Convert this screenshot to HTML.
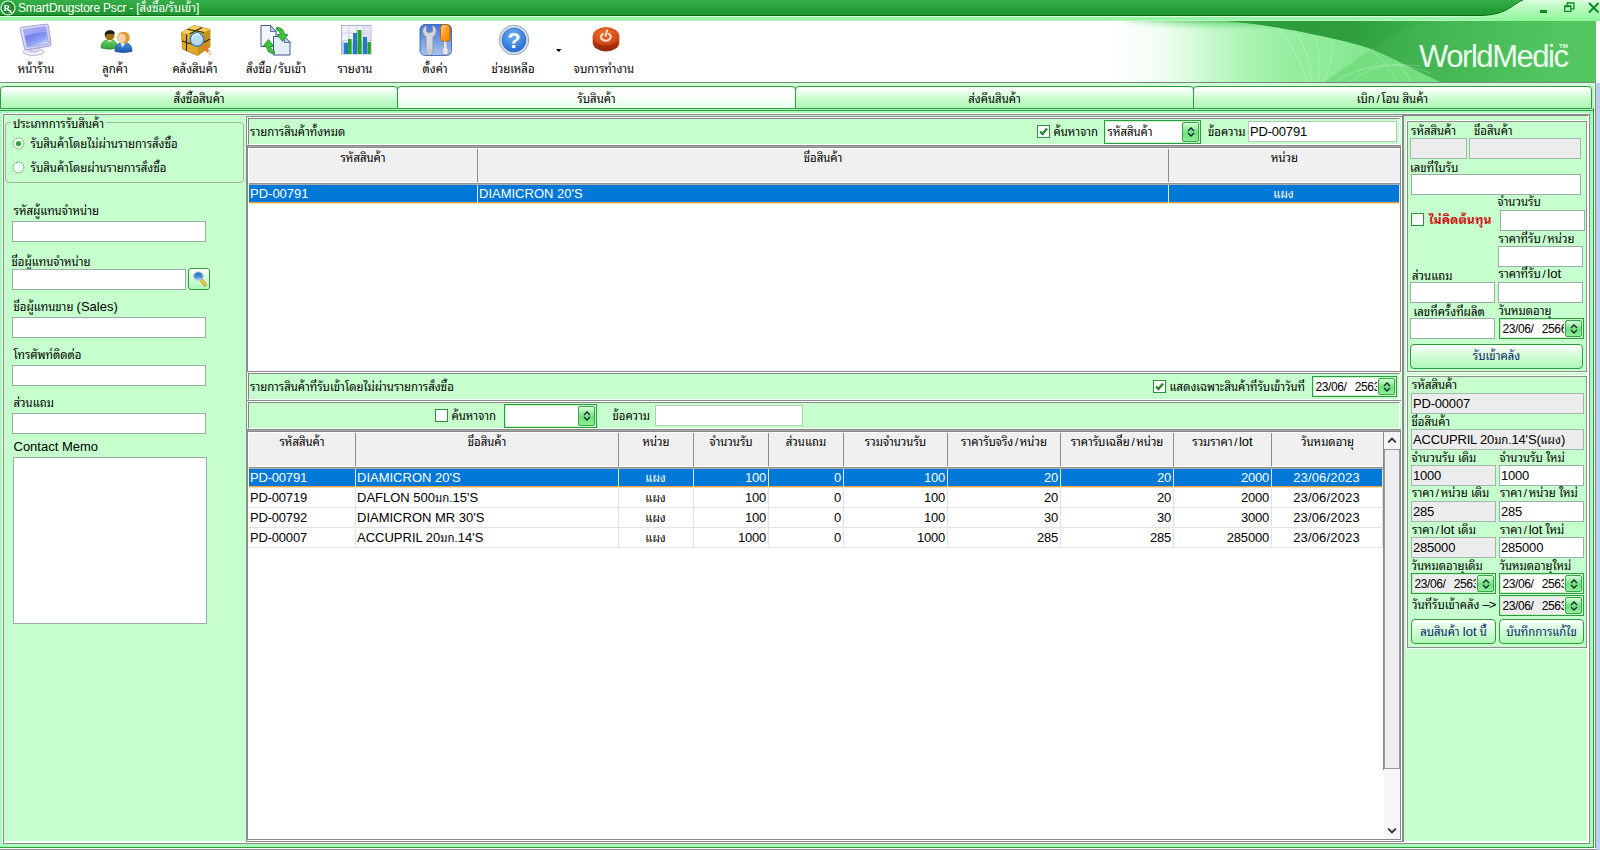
<!DOCTYPE html>
<html lang="th">
<head>
<meta charset="utf-8">
<title>SmartDrugstore Pscr</title>
<style>
html,body{margin:0;padding:0;}
body{width:1600px;height:850px;overflow:hidden;position:relative;background:#c6ffcd;
 font-family:"Liberation Sans","Noto Sans Thai Looped","Loma","Tahoma",sans-serif;font-size:11.4px;color:#000;}
*{box-sizing:border-box;}
.a{position:absolute;}
.l{font-size:13px;}
.s{padding:0 1.700px;}
.t{position:absolute;white-space:nowrap;line-height:14px;height:14px;}
.in{position:absolute;background:#fff;border:1px solid #9aadaa;}
.dis{background:#ececec;border-color:#a3b8ac;}
.v{position:absolute;white-space:nowrap;font-size:13px;line-height:15px;left:1px;top:2px;}
.dsp{letter-spacing:0.15px;}
/* title */
#title{left:0;top:0;width:1600px;height:21px;background:linear-gradient(#dcfde0 0,#b9f9c0 8px,#8ef79a 21px);}
#titled{left:0;top:0;width:1600px;height:16px;}
#band{left:0;top:16px;width:1520px;height:5px;-webkit-mask-image:linear-gradient(to right,#000 0,#000 1440px,transparent 1515px);mask-image:linear-gradient(to right,#000 0,#000 1440px,transparent 1515px);background:linear-gradient(#dcffe2 0,#dcffe2 1px,#98f5a6 1px,#98f5a6 4px,#d2fbd7 5px);}
#tb{left:0;top:21px;width:1596px;height:61px;background:#fff;}
#tbline{left:0;top:82px;width:1596px;height:1px;background:#788a7c;}
#rstrip{left:1596px;top:21px;width:4px;height:829px;background:#fff;}
#rstrip2{left:1596px;top:83px;width:4px;height:767px;background:#b9d0ee;}
.tbl{position:absolute;top:62px;width:90px;text-align:center;white-space:nowrap;line-height:14px;font-size:11.4px;}
.tab{position:absolute;top:86px;height:23px;border:1px solid #2f9a3f;border-radius:4px 4px 0 0;
 background:linear-gradient(#ffffff 0%,#effff0 22%,#c9fcce 55%,#adf7b5 100%);text-align:center;line-height:23px;padding-top:1px;font-size:11.4px;}
.tab.act{background:linear-gradient(#ffffff 0%,#fbfffb 40%,#e6ffe8 100%);}
/* panels */
.pn{position:absolute;border:1px solid #8a8a8a;box-shadow:inset 1px 1px 0 #fff;}
.pn2{position:absolute;border-top:1px solid #868686;border-left:1px solid #868686;border-right:1px solid #fff;border-bottom:1px solid #fff;}
.hc{position:absolute;height:33px;border-right:1px solid #8c8c8c;text-align:center;line-height:14px;padding-top:2px;white-space:nowrap;}
.num{letter-spacing:-0.2px;}
.v .th{font-size:11.4px;letter-spacing:0;}
.dt{font-size:12px;overflow:hidden;left:2.5px;top:3px;white-space:pre;letter-spacing:-0.4px;word-spacing:1.24px;}
.row{position:absolute;left:0;height:20px;white-space:nowrap;}
.row .c{position:absolute;top:0;height:100%;border-right:1px solid #e3e3e3;border-bottom:1px solid #e3e3e3;font-size:13px;line-height:19.400px;padding:0 2px 0 1px;overflow:hidden;}
.row .th{font-size:11.4px;padding-top:1px;}
.row.sel{background:#0078d7;color:#fff;}
.row.sel .c{border-right-color:#dfe9f5;border-bottom-color:#f3dcb0;box-shadow:inset 0 -1px 0 #e8a33d;line-height:17.400px;}
.r{text-align:right;}
.m{text-align:center;}
.cb{position:absolute;width:13px;height:13px;background:#fff;border:1px solid #2f8f3d;}
.combo{position:absolute;background:#fff;border:1px solid #2f9a3f;box-shadow:inset 0 0 0 1px #c4f5c9;}
.combo .bt{position:absolute;right:1px;top:1px;bottom:1px;width:17px;border:1px solid #39a648;border-radius:2px;
 background:linear-gradient(#d6ffd9,#6fe07c 55%,#8cf096);}
.combo .bt svg{position:absolute;left:50%;top:50%;margin:-5px 0 0 -4px;}
.btn{position:absolute;border:1px solid #2f9a3f;border-radius:4px;background:linear-gradient(#ffffff 0%,#e0ffe3 30%,#aef8b6 100%);
 text-align:center;font-size:11.4px;color:#0a246a;white-space:nowrap;}
</style>
</head>
<body>
<!-- TITLE BAR -->
<div class="a" id="title"></div>
<svg class="a" id="titled" width="1600" height="16" viewBox="0 0 1600 16">
 <defs>
  <linearGradient id="tg" x1="0" y1="0" x2="0" y2="1">
   <stop offset="0" stop-color="#35ad49"/><stop offset="0.75" stop-color="#239b34"/><stop offset="1" stop-color="#1f922f"/>
  </linearGradient>
 </defs>
 <path d="M0 0H1523C1512 4 1508 15 1480 15.5H0Z" fill="url(#tg)"/>
 <path d="M0 15.5H1480C1508 15 1512 4 1523 0" fill="none" stroke="#0b6b16" stroke-width="1"/>
 <circle cx="8" cy="8" r="7" fill="#1f8a30" stroke="#e8ffe9" stroke-width="1.2"/>
 <text x="3.5" y="11" font-family="Liberation Serif,serif" font-size="9" font-weight="bold" fill="#fff">R</text>
 <text x="8.5" y="13" font-family="Liberation Serif,serif" font-size="7" font-weight="bold" fill="#fff">x</text>
 <rect x="1540" y="10" width="7" height="3" fill="#0f8a1f"/>
 <path d="M1564.700 6.200h6.200v5.200h-6.200zM1567.200 5v-2h6.700v5.800h-2.500" fill="none" stroke="#0f8a1f" stroke-width="1.300"/>
 <path d="M1564.700 6.200h6.200" stroke="#0f8a1f" stroke-width="2"/>
 <path d="M1589 3l9.500 9.500M1598.500 3l-9.500 9.500" stroke="#0f8a1f" stroke-width="2" fill="none"/>
</svg>
<div class="t" style="left:18px;top:1px;color:#fff;font-size:11.4px;"><span style="font-size:12px;letter-spacing:-0.2px;">SmartDrugstore Pscr - [</span>สั่งซื้อ/รับเข้า<span style="font-size:12px;">]</span></div>
<div class="a" id="band"></div>

<!-- TOOLBAR -->
<div class="a" id="tb"></div>
<svg class="a" style="left:1000px;top:21px;" width="596" height="61" viewBox="0 0 596 61">
 <defs>
  <linearGradient id="wg" x1="0" y1="0" x2="1" y2="0">
   <stop offset="0" stop-color="#ffffff"/>
   <stop offset="0.19" stop-color="#ffffff"/>
   <stop offset="0.27" stop-color="#f0fef2"/>
   <stop offset="0.34" stop-color="#cdfad3"/>
   <stop offset="0.42" stop-color="#a8f4b0"/>
   <stop offset="0.50" stop-color="#93ed9e"/>
   <stop offset="0.62" stop-color="#84e790"/>
   <stop offset="1" stop-color="#6edb7b"/>
  </linearGradient>
  <linearGradient id="dg" gradientUnits="userSpaceOnUse" x1="250" y1="0" x2="560" y2="70">
   <stop offset="0" stop-color="#2c9c3c"/>
   <stop offset="0.3" stop-color="#2d9d3d"/>
   <stop offset="0.55" stop-color="#3bb24b"/>
   <stop offset="1" stop-color="#4dc45c"/>
  </linearGradient>
  <linearGradient id="tl" x1="0" y1="0" x2="1" y2="0">
   <stop offset="0" stop-color="#3aa84a" stop-opacity="0"/>
   <stop offset="0.35" stop-color="#3aa84a" stop-opacity=".8"/>
   <stop offset="1" stop-color="#2c9c3c" stop-opacity="1"/>
  </linearGradient>
  <radialGradient id="tb2" cx=".5" cy=".5" r=".5"><stop offset="0" stop-color="#5fcf6d" stop-opacity=".9"/><stop offset="1" stop-color="#8fe89a" stop-opacity="0"/></radialGradient>
  <radialGradient id="wb" gradientUnits="userSpaceOnUse" cx="150" cy="38" r="150" gradientTransform="translate(0 12) scale(1 .7)">
   <stop offset="0" stop-color="#fff" stop-opacity="1"/><stop offset=".6" stop-color="#fff" stop-opacity=".85"/><stop offset="1" stop-color="#fff" stop-opacity="0"/>
  </radialGradient>
 </defs>
 <rect width="596" height="61" fill="url(#wg)"/>
 <rect x="120" y="0" width="476" height="2" fill="url(#tl)"/>
 <ellipse cx="235" cy="0" rx="120" ry="10" fill="url(#tb2)"/>
 <path d="M226 0C270 4 310 12 337 18.500C352 22 362 25 371 28C395 38 420 52 440 61H596V0Z" fill="url(#dg)"/>
 <path d="M324 61C345 47 360 36 371 28C385 19 405 7 431 0H596V61Z" fill="#fff" opacity=".04"/>
 <path d="M324 61C345 47 360 36 371 28C395 38 420 52 440 61Z" fill="#74de81"/>
 <g fill="none" stroke="#f3fff4" stroke-width=".8" opacity=".32">
  <path d="M308 61C300 40 290 20 278 6"/>
  <path d="M312 61C310 40 304 22 294 9"/>
  <path d="M318 61C320 42 320 26 314 14"/>
  <path d="M324 61C330 44 334 30 331 18"/>
  <path d="M335 61C350 50 380 40 420 45"/>
  <path d="M350 61C370 45 395 38 430 52"/>
  <path d="M372 30C385 40 392 50 396 61"/>
  <path d="M395 40C403 47 408 54 410 61"/>
 </g>
 <text x="419" y="46" font-family="Liberation Sans,sans-serif" font-size="31" letter-spacing="-1.45" fill="#eefff0">WorldMedic</text>
 <text x="559" y="27" font-family="Liberation Sans,sans-serif" font-size="6" font-weight="bold" fill="#eefff0">TM</text>
</svg>
<div class="a" id="tbline"></div>
<div class="a" style="left:0;top:83px;width:1595px;height:765px;background:#aafcb8;"></div>
<div class="a" style="left:0;top:83px;width:1595px;height:3px;background:#d2fcd8;"></div>
<div class="a" id="rstrip"></div><div class="a" id="rstrip2"></div>
<div class="a" style="left:1595px;top:82px;width:1px;height:768px;background:#858585;"></div>

<!-- toolbar icons -->

<!-- icon: monitor -->
<svg class="a" style="left:19px;top:23px;" width="34" height="34" viewBox="0 0 34 34">
 <defs><linearGradient id="mg" x1="0.1" y1="0" x2="0.7" y2="1"><stop offset="0" stop-color="#9a9af8"/><stop offset=".4" stop-color="#747cec"/><stop offset=".75" stop-color="#93a6f5"/><stop offset="1" stop-color="#dfe8ff"/></linearGradient>
 <linearGradient id="mf" x1="0" y1="0" x2="1" y2="1"><stop offset="0" stop-color="#e6e6fa"/><stop offset="1" stop-color="#c4c4ea"/></linearGradient></defs>
 <ellipse cx="14.500" cy="28.800" rx="10.500" ry="3.700" fill="#ebebf6" stroke="#b4b4d4" stroke-width=".9"/>
 <ellipse cx="14.500" cy="28" rx="6" ry="1.800" fill="#d0d0e6"/>
 <path d="M11.500 21.500l1.200 6.500h6l.8-7.500z" fill="#e4e4f4" stroke="#b9b9d8" stroke-width=".7"/>
 <path d="M1.800 4.400L27.300 1.100Q29.200 1 29.500 2.800L32 21Q32.100 22.700 30.600 23L7.700 26.900Q5.900 27.100 5.500 25.400L1.100 6.300Q.9 4.700 1.800 4.400Z" fill="url(#mf)" stroke="#9898cf" stroke-width=".9"/>
 <path d="M4.300 6.600L26.900 3.600L29.200 20.600L8.200 24.200Z" fill="url(#mg)" stroke="#8f93d8" stroke-width=".5"/>
 <path d="M4.300 6.600L26.900 3.600L27.600 9.500C20 8.500 12 12.500 5.800 13Z" fill="#b9b9fb" opacity=".6"/>
</svg>
<!-- icon: people -->
<svg class="a" style="left:100px;top:27px;" width="33" height="27" viewBox="0 0 33 27">
 <defs><linearGradient id="pgm" x1="0" y1="0" x2="0" y2="1"><stop offset="0" stop-color="#6fd56f"/><stop offset="1" stop-color="#2f9e37"/></linearGradient>
 <linearGradient id="pgw" x1="0" y1="0" x2="0" y2="1"><stop offset="0" stop-color="#4a8fe0"/><stop offset="1" stop-color="#1b57a8"/></linearGradient></defs>
 <g transform="translate(0 2) scale(1 .9)">
 <path d="M1 21C1 14.500 4.500 12 9.500 12S17 14.500 17.500 21Q9.500 24 1 21Z" fill="url(#pgm)" stroke="#2a8c30" stroke-width=".7"/>
 <path d="M7 12.200L9.500 14.500L12.500 12.200Z" fill="#eef6ee"/>
 <ellipse cx="9.800" cy="7.500" rx="4.600" ry="5" fill="#a06c12"/>
 <path d="M4.800 7.500C4.500 3 7 1.500 10 1.500S15 3.200 14.600 6C12 5 8 4.800 6.500 6.200Q5.800 7 5.400 9Z" fill="#1c1a14"/>
 <path d="M15 25C15 18 18 15 23.500 15S32 18 32 25Q23.500 27.500 15 25Z" fill="url(#pgw)" stroke="#174e96" stroke-width=".7"/>
 <path d="M20.500 15.200L22.200 20.500L24 18L25.500 15.200Z" fill="#e9f1fb"/>
 <ellipse cx="23.500" cy="9.500" rx="6.300" ry="6.500" fill="#e29a2c"/>
 <ellipse cx="21.800" cy="10.300" rx="3.800" ry="4.900" fill="#fbd3b0"/>
 </g>
</svg>
<!-- icon: box + magnifier -->
<svg class="a" style="left:180px;top:24px;" width="33" height="33" viewBox="0 0 33 33">
 <path d="M1.500 8.500L14 1.500L30 5.500V23L17.500 31.500L2.500 25Z" fill="#e0ac28" stroke="#b07d10" stroke-width=".8"/>
 <path d="M1.500 8.500L14 1.500L30 5.500L17.500 11.500Z" fill="#f3cf57"/>
 <path d="M17.500 11.500L30 5.500V23L17.500 31.500Z" fill="#c8931a"/>
 <path d="M7.500 5.200L24 8.500M9.500 10L22 3.500M6.500 10.500V27M2 17L17.500 22L30 15" fill="none" stroke="#2a2208" stroke-width="1.100"/>
 <path d="M22 21L30 29.500" stroke="#e8792a" stroke-width="3.200" stroke-linecap="round"/>
 <path d="M29 28.500L30.500 30" stroke="#f1e3d6" stroke-width="3" stroke-linecap="round"/>
 <circle cx="17" cy="15.500" r="6.800" fill="#b6dbf3" stroke="#4d7fae" stroke-width="1.500"/>
 <path d="M12.500 13.500A5 5 0 0 1 19 10.500" fill="none" stroke="#eaf6ff" stroke-width="1.600" stroke-linecap="round"/>
</svg>
<!-- icon: documents + arrows -->
<svg class="a" style="left:260px;top:24px;" width="33" height="33" viewBox="0 0 33 33">
 <path d="M1 1.500H10.500L16 7.500V22.500H1Z" fill="#f4f8fe" stroke="#42578f" stroke-width="1"/>
 <path d="M10.500 1.500V7.500H16Z" fill="#bfd2ee" stroke="#42578f" stroke-width=".8"/>
 <path d="M13.500 12.500H24.500L30 18.500V31H13.500Z" fill="#e6eefb" stroke="#42578f" stroke-width="1"/>
 <path d="M24.500 12.500V18.500H30Z" fill="#bfd2ee" stroke="#42578f" stroke-width=".8"/>
 <path d="M16.500 3.500Q23.500 3 24.500 10.500H28L22.500 17.500L17 10.500H20.500Q20 6.500 16.500 6Z" fill="#3cc23c" stroke="#1c8c1c" stroke-width=".8"/>
 <path d="M14.500 29.500Q7.500 30 6.500 22.500H3L8.500 15.500L14 22.500H10.500Q11 26.500 14.500 27Z" fill="#3cc23c" stroke="#1c8c1c" stroke-width=".8"/>
</svg>
<!-- icon: chart -->
<svg class="a" style="left:341px;top:25px;" width="31" height="30" viewBox="0 0 31 30">
 <rect x=".5" y=".5" width="29.500" height="28.500" fill="#f1f1f8" stroke="#9aa0c4" stroke-width=".8"/>
 <path d="M.5 8H30M.5 15.500H30M8 .5V29M15.500 .5V29M23 .5V29" stroke="#c4bfd8" stroke-width=".7" fill="none"/>
 <rect x="21" y="1" width="9" height="14" fill="#d8daf0" opacity=".7"/>
 <rect x="0.800" y="17" width="29" height="12" fill="#9cc3ea" opacity=".8"/>
 <rect x="3" y="18" width="4" height="11" fill="#2778c9"/>
 <rect x="7" y="14" width="3.500" height="15" fill="#2aa41f"/>
 <rect x="12" y="8" width="4" height="21" fill="#2778c9"/>
 <rect x="16.500" y="5" width="4" height="24" fill="#2aa41f"/>
 <rect x="22" y="12" width="4" height="17" fill="#2778c9"/>
 <rect x="26.500" y="17" width="3.300" height="12" fill="#2aa41f"/>
</svg>
<!-- icon: tools -->
<svg class="a" style="left:419px;top:23px;" width="34" height="34" viewBox="0 0 34 34">
 <defs><linearGradient id="tgb" x1="0" y1="0" x2="0" y2="1"><stop offset="0" stop-color="#3f74d8"/><stop offset="1" stop-color="#a9c4f3"/></linearGradient>
 <linearGradient id="tgo" x1="0" y1="0" x2="1" y2="1"><stop offset="0" stop-color="#ffd9a0"/><stop offset=".5" stop-color="#ff9a1c"/><stop offset="1" stop-color="#f57f00"/></linearGradient></defs>
 <rect x="1" y="1.500" width="31.500" height="31" rx="5" fill="url(#tgb)" stroke="#2b55a8" stroke-width=".8"/>
 <path d="M7.500 2.500C3.500 4 2.500 9 5.500 12.500L7 14V28.500Q7.200 32 10.500 32T14 28.500V14L15.500 12.500C18.500 9 17.500 4 13.500 2.500V8.500Q10.500 11 7.500 8.500Z" fill="#d4d7de" stroke="#8a8f9c" stroke-width=".8"/>
 <circle cx="10.500" cy="28" r="1.600" fill="#f4f4f8" stroke="#8a8f9c" stroke-width=".7"/>
 <rect x="21.500" y="1.500" width="9.500" height="17" rx="3.500" fill="url(#tgo)" stroke="#b45a00" stroke-width=".8"/>
 <path d="M24.500 18.500h3.500v6l1.200 2v4.500q-3 1.500-6 0v-4.500l1.300-2z" fill="#e4e6ec" stroke="#8a8f9c" stroke-width=".7"/>
</svg>
<!-- icon: help -->
<svg class="a" style="left:498px;top:24px;" width="32" height="32" viewBox="0 0 32 32">
 <defs><radialGradient id="hg" cx=".45" cy=".3" r=".8"><stop offset="0" stop-color="#6cb0f4"/><stop offset="1" stop-color="#1d63cf"/></radialGradient></defs>
 <circle cx="16" cy="16" r="14.800" fill="#d6dde8" stroke="#8f9db4" stroke-width=".9"/>
 <circle cx="16" cy="16" r="12" fill="url(#hg)" stroke="#2d62b8" stroke-width=".6"/>
 <text x="16" y="24" text-anchor="middle" font-family="Liberation Sans,sans-serif" font-weight="bold" font-size="22" fill="#fff">?</text>
</svg>
<!-- icon: power -->
<svg class="a" style="left:591px;top:26px;" width="30" height="28" viewBox="0 0 30 28">
 <defs><radialGradient id="pg" cx=".45" cy=".35" r=".75"><stop offset="0" stop-color="#f0702a"/><stop offset=".6" stop-color="#d9501a"/><stop offset="1" stop-color="#b93a0e"/></radialGradient>
 <linearGradient id="pw" x1="0" y1="0" x2="0" y2="1"><stop offset="0" stop-color="#c8420f"/><stop offset="1" stop-color="#8f2405"/></linearGradient></defs>
 <path d="M1.700 10.500V16.500A13.300 9 0 0 0 28.300 16.500V10.500Z" fill="url(#pw)"/>
 <ellipse cx="15" cy="10.300" rx="13.300" ry="9.200" fill="url(#pg)"/>
 <path d="M11.600 8A4.900 3.800 0 1 0 17.800 7.800" fill="none" stroke="#fbe3d3" stroke-width="2.100" stroke-linecap="round"/>
 <path d="M16.200 4.300L14.600 9.800" stroke="#fbe3d3" stroke-width="1.900" stroke-linecap="round"/>
</svg>

<div class="tbl" style="left:-9px;">หน้าร้าน</div>
<div class="tbl" style="left:70px;">ลูกค้า</div>
<div class="tbl" style="left:150px;">คลังสินค้า</div>
<div class="tbl" style="left:231px;">สั่งซื้อ<span class="s">/</span>รับเข้า</div>
<div class="tbl" style="left:310px;">รายงาน</div>
<div class="tbl" style="left:390px;">ตั้งค่า</div>
<div class="tbl" style="left:468px;">ช่วยเหลือ</div>
<div class="tbl" style="left:559px;">จบการทำงาน</div>
<svg class="a" style="left:556px;top:49px;" width="6" height="4"><path d="M0 0h5.500l-2.750 3z" fill="#000"/></svg>

<!-- TABS -->
<div class="tab" style="left:0;width:398px;">สั่งซื้อสินค้า</div>
<div class="tab act" style="left:397px;width:399px;">รับสินค้า</div>
<div class="tab" style="left:795px;width:399px;">ส่งคืนสินค้า</div>
<div class="tab" style="left:1193px;width:399px;">เบิก<span class="s">/</span>โอน สินค้า</div>
<div class="a" style="left:0px;top:110px;width:1594px;height:1px;background:#2f9a3f;"></div>
<div class="a" style="left:1593px;top:108px;width:1px;height:740px;background:#2f9a3f;"></div>
<div class="a" style="left:0px;top:847px;width:1594px;height:1px;background:#2f9a3f;"></div>
<div class="a" style="left:0px;top:848px;width:1596px;height:1px;background:#ffffff;"></div>
<div class="a" style="left:0px;top:849px;width:1596px;height:1px;background:#8c8c8c;"></div>
<div class="a" style="left:1594px;top:83px;width:1px;height:765px;background:#eefff0;"></div>

<!-- PAGE PANEL -->
<div class="a" style="left:2px;top:113px;width:1587px;height:730px;background:#ffffff;"></div>
<div class="a" style="left:3px;top:114px;width:1587px;height:730px;background:#8a8a8a;"></div>
<div class="a" style="left:4px;top:115px;width:1584px;height:727px;background:#c6ffcd;"></div>
<div class="a" style="left:1587px;top:115px;width:2px;height:728px;background:#ffffff;"></div>
<div class="a" style="left:4px;top:841px;width:1585px;height:2px;background:#ffffff;"></div>



<!-- LEFT PANEL -->
<div class="a" style="left:5px;top:122px;width:239px;height:61px;border:1px solid #9bb8a2;border-radius:4px;"></div>
<div class="t" style="left:11px;top:117px;background:#c6ffcd;padding:0 2px;">ประเภทการรับสินค้า</div>
<svg class="a" style="left:12.0px;top:137.0px;" width="13" height="13"><defs><radialGradient id="rg143.5" cx=".35" cy=".35" r=".8"><stop offset="0" stop-color="#ffffff"/><stop offset="1" stop-color="#d9f7dc"/></radialGradient></defs><circle cx="6.500" cy="6.500" r="5.400" fill="url(#rg143.5)" stroke="#3a9d48" stroke-width="1" stroke-dasharray="1.400 1.100"/><circle cx="6.500" cy="6.500" r="2.600" fill="#2fa53f"/></svg>
<div class="t" style="left:30.5px;top:137px;">รับสินค้าโดยไม่ผ่านรายการสั่งซื้อ</div>
<svg class="a" style="left:12.0px;top:161.0px;" width="13" height="13"><defs><radialGradient id="rg167.5" cx=".35" cy=".35" r=".8"><stop offset="0" stop-color="#ffffff"/><stop offset="1" stop-color="#d9f7dc"/></radialGradient></defs><circle cx="6.500" cy="6.500" r="5.400" fill="url(#rg167.5)" stroke="#3a9d48" stroke-width="1" stroke-dasharray="1.400 1.100"/></svg>
<div class="t" style="left:30.5px;top:161px;">รับสินค้าโดยผ่านรายการสั่งซื้อ</div>
<div class="t" style="left:13.5px;top:204px;">รหัสผู้แทนจำหน่าย</div>
<div class="in" style="left:12px;top:221px;width:194px;height:21px;"></div>
<div class="t" style="left:11.5px;top:255px;">ชื่อผู้แทนจำหน่าย</div>
<div class="in" style="left:12px;top:269px;width:174px;height:21px;"></div>
<div class="btn" style="left:188px;top:268px;width:22px;height:22px;border-radius:3px;"><svg class="a" style="left:2px;top:2px;" width="17" height="17" viewBox="0 0 17 17"><defs><linearGradient id="lg1" x1="0" y1="0" x2="0" y2="1"><stop offset="0" stop-color="#2468bd"/><stop offset=".6" stop-color="#4c93dc"/><stop offset="1" stop-color="#bcdcf6"/></linearGradient></defs><path d="M10.800 9.500L14 13.700" stroke="#b98a18" stroke-width="3.400" stroke-linecap="round"/><path d="M10.800 9.500L14 13.700" stroke="#f2cd3c" stroke-width="2.200" stroke-linecap="round"/><ellipse cx="7.400" cy="5.200" rx="4.800" ry="4.300" fill="url(#lg1)" stroke="#b9c8d8" stroke-width="1"/></svg></div>
<div class="t" style="left:13.5px;top:300px;">ชื่อผู้แทนขาย <span class="l">(Sales)</span></div>
<div class="in" style="left:12px;top:317px;width:194px;height:21px;"></div>
<div class="t" style="left:13.5px;top:348px;">โทรศัพท์ติดต่อ</div>
<div class="in" style="left:12px;top:365px;width:194px;height:21px;"></div>
<div class="t" style="left:13.5px;top:396px;">ส่วนแถม</div>
<div class="in" style="left:12px;top:413px;width:194px;height:21px;"></div>
<div class="t l" style="left:13.500px;top:439.500px;">Contact Memo</div>
<div class="in" style="left:13px;top:457px;width:194px;height:167px;"></div>
<!-- CENTER -->
<div class="a" style="left:246px;top:116px;width:1157px;height:1px;background:#8a8a8a;"></div>
<div class="a" style="left:246px;top:116px;width:1px;height:726px;background:#8a8a8a;"></div>
<div class="a" style="left:247px;top:117px;width:1155px;height:1px;background:#fff;"></div>
<div class="a" style="left:247px;top:117px;width:1px;height:724px;background:#fff;"></div>
<div class="a" style="left:1402px;top:116px;width:1px;height:726px;background:#8a8a8a;"></div>
<div class="a" style="left:246px;top:841px;width:1157px;height:1px;background:#8a8a8a;"></div>
<div class="a" style="left:1401px;top:117px;width:1px;height:724px;background:#fff;"></div>
<div class="pn2" style="left:248px;top:118px;width:1152px;height:27px;"></div>
<div class="t" style="left:250px;top:125px;">รายการสินค้าทั้งหมด</div>
<div class="cb" style="left:1037px;top:125px;"><svg width="11" height="11" style="position:absolute;left:0;top:0"><path d="M2 5.500l2.500 2.500l4.500-5.500" fill="none" stroke="#1d8a2d" stroke-width="2.200"/></svg></div>
<div class="t" style="left:1053.5px;top:125px;">ค้นหาจาก</div>
<div class="combo" style="left:1104px;top:120px;width:97px;height:24px;"><div class="t" style="left:2.500px;top:4px;">รหัสสินค้า</div><div class="bt"><svg width="8" height="10"><path d="M1 4l3-3l3 3M1 6l3 3l3-3" fill="none" stroke="#123" stroke-width="1.300"/></svg></div></div>
<div class="t" style="left:1208px;top:125px;">ข้อความ</div>
<div class="in" style="left:1248px;top:121px;width:149px;height:21px;border-color:#b4c9b6;"><div class="v num" style="top:2px;">PD-00791</div></div>
<div class="a" style="left:247px;top:145px;width:1154px;height:1px;background:#8a8a8a;"></div>
<div class="a" style="left:247px;top:146px;width:1154px;height:1px;background:#a6a6a6;"></div>
<div class="a" style="left:247px;top:147px;width:1154px;height:1px;background:#8a8a8a;"></div>
<div class="a" style="left:247px;top:145px;width:1px;height:226px;background:#8a8a8a;"></div>
<div class="a" style="left:1400px;top:145px;width:1px;height:227px;background:#8a8a8a;"></div>
<div class="a" style="left:248px;top:148px;width:1152px;height:223px;background:#fff;"></div>
<div class="a" style="left:249px;top:149px;width:1151px;height:33px;background:#f0f0f0;"></div>
<div class="a" style="left:249px;top:183px;width:1151px;height:1px;background:#909090;"></div>
<div class="a" style="left:249px;top:184px;width:1151px;height:1px;background:#adadad;"></div>
<div class="hc" style="left:249px;top:149px;width:229px;">รหัสสินค้า</div>
<div class="hc" style="left:478px;top:149px;width:691px;">ชื่อสินค้า</div>
<div class="hc" style="left:1169px;top:149px;width:231px;border-right:none;">หน่วย</div>
<div class="row sel" style="left:249px;top:185px;width:1151px;height:19px;">
 <div class="c " style="left:0px;width:229px;">PD-00791</div>
 <div class="c " style="left:229px;width:691px;">DIAMICRON 20'S</div>
 <div class="c m th" style="left:920px;width:231px;">แผง</div>
</div>
<div class="a" style="left:247px;top:371px;width:1154px;height:1px;background:#8a8a8a;"></div>
<div class="a" style="left:247px;top:372px;width:1154px;height:1px;background:#fff;"></div>
<div class="pn2" style="left:248px;top:373px;width:1152px;height:27px;"></div>
<div class="t" style="left:250px;top:380px;">รายการสินค้าที่รับเข้าโดยไม่ผ่านรายการสั่งซื้อ</div>
<div class="cb" style="left:1153px;top:380px;"><svg width="11" height="11" style="position:absolute;left:0;top:0"><path d="M2 5.500l2.500 2.500l4.500-5.500" fill="none" stroke="#1d8a2d" stroke-width="2.200"/></svg></div>
<div class="t" style="left:1169.5px;top:380px;">แสดงเฉพาะสินค้าที่รับเข้าวันที่</div>
<div class="combo" style="left:1312px;top:376px;width:85px;height:21px;"><div class="v dt" style="width:61.5px;">23/06/  2563</div><div class="bt" style="width:17px;"><svg width="8" height="10"><path d="M1 4l3-3l3 3M1 6l3 3l3-3" fill="none" stroke="#123" stroke-width="1.300"/></svg></div></div>
<div class="a" style="left:247px;top:400px;width:1154px;height:1px;background:#8a8a8a;"></div>
<div class="a" style="left:247px;top:401px;width:1154px;height:1px;background:#fff;"></div>
<div class="pn2" style="left:248px;top:402px;width:1152px;height:27px;"></div>
<div class="cb" style="left:435px;top:409px;"></div>
<div class="t" style="left:451.5px;top:409px;">ค้นหาจาก</div>
<div class="combo" style="left:504px;top:404px;width:93px;height:24px;"><div class="bt"><svg width="8" height="10"><path d="M1 4l3-3l3 3M1 6l3 3l3-3" fill="none" stroke="#123" stroke-width="1.300"/></svg></div></div>
<div class="t" style="left:612.5px;top:409px;">ข้อความ</div>
<div class="in" style="left:655px;top:405px;width:148px;height:21px;border-color:#b4c9b6;"></div>
<div class="a" style="left:247px;top:429px;width:1154px;height:1px;background:#8a8a8a;"></div>
<div class="a" style="left:247px;top:430px;width:1154px;height:1px;background:#a6a6a6;"></div>
<div class="a" style="left:247px;top:431px;width:1154px;height:1px;background:#8a8a8a;"></div>
<div class="a" style="left:247px;top:429px;width:1px;height:410px;background:#8a8a8a;"></div>
<div class="a" style="left:1400px;top:429px;width:1px;height:411px;background:#8a8a8a;"></div>
<div class="a" style="left:248px;top:432px;width:1152px;height:407px;background:#fff;"></div>
<div class="a" style="left:249px;top:433px;width:1134px;height:33px;background:#f0f0f0;"></div>
<div class="a" style="left:249px;top:467px;width:1134px;height:1px;background:#909090;"></div>
<div class="a" style="left:249px;top:468px;width:1134px;height:1px;background:#adadad;"></div>
<div class="a" style="left:247px;top:839px;width:1154px;height:1px;background:#8a8a8a;"></div>
<div class="a" style="left:247px;top:840px;width:1154px;height:1px;background:#fff;"></div>
<div class="hc" style="left:249px;top:433px;width:107px;">รหัสสินค้า</div>
<div class="hc" style="left:356px;top:433px;width:263px;">ชื่อสินค้า</div>
<div class="hc" style="left:619px;top:433px;width:75px;">หน่วย</div>
<div class="hc" style="left:694px;top:433px;width:75px;">จำนวนรับ</div>
<div class="hc" style="left:769px;top:433px;width:75px;">ส่วนแถม</div>
<div class="hc" style="left:844px;top:433px;width:104px;">รวมจำนวนรับ</div>
<div class="hc" style="left:948px;top:433px;width:113px;">ราคารับจริง<span class="s">/</span>หน่วย</div>
<div class="hc" style="left:1061px;top:433px;width:113px;">ราคารับเฉลี่ย<span class="s">/</span>หน่วย</div>
<div class="hc" style="left:1174px;top:433px;width:98px;">รวมราคา<span class="s">/</span><span class="l">lot</span></div>
<div class="hc" style="left:1272px;top:433px;width:111px;border-right:none;">วันหมดอายุ</div>
<div class="row sel" style="left:249px;top:469px;width:1134px;height:19px;">
 <div class="c num" style="left:0px;width:107px;">PD-00791</div>
 <div class="c " style="left:107px;width:263px;">DIAMICRON 20'S</div>
 <div class="c m th" style="left:370px;width:75px;">แผง</div>
 <div class="c r num" style="left:445px;width:75px;">100</div>
 <div class="c r num" style="left:520px;width:75px;">0</div>
 <div class="c r num" style="left:595px;width:104px;">100</div>
 <div class="c r num" style="left:699px;width:113px;">20</div>
 <div class="c r num" style="left:812px;width:113px;">20</div>
 <div class="c r num" style="left:925px;width:98px;">2000</div>
 <div class="c m dsp" style="left:1023px;width:111px;">23/06/2023</div>
</div>
<div class="row" style="left:249px;top:488px;width:1134px;height:20px;">
 <div class="c num" style="left:0px;width:107px;">PD-00719</div>
 <div class="c " style="left:107px;width:263px;">DAFLON 500<span class="th">มก.</span>15'S</div>
 <div class="c m th" style="left:370px;width:75px;">แผง</div>
 <div class="c r num" style="left:445px;width:75px;">100</div>
 <div class="c r num" style="left:520px;width:75px;">0</div>
 <div class="c r num" style="left:595px;width:104px;">100</div>
 <div class="c r num" style="left:699px;width:113px;">20</div>
 <div class="c r num" style="left:812px;width:113px;">20</div>
 <div class="c r num" style="left:925px;width:98px;">2000</div>
 <div class="c m dsp" style="left:1023px;width:111px;">23/06/2023</div>
</div>
<div class="row" style="left:249px;top:508px;width:1134px;height:20px;">
 <div class="c num" style="left:0px;width:107px;">PD-00792</div>
 <div class="c " style="left:107px;width:263px;">DIAMICRON MR 30'S</div>
 <div class="c m th" style="left:370px;width:75px;">แผง</div>
 <div class="c r num" style="left:445px;width:75px;">100</div>
 <div class="c r num" style="left:520px;width:75px;">0</div>
 <div class="c r num" style="left:595px;width:104px;">100</div>
 <div class="c r num" style="left:699px;width:113px;">30</div>
 <div class="c r num" style="left:812px;width:113px;">30</div>
 <div class="c r num" style="left:925px;width:98px;">3000</div>
 <div class="c m dsp" style="left:1023px;width:111px;">23/06/2023</div>
</div>
<div class="row" style="left:249px;top:528px;width:1134px;height:20px;">
 <div class="c num" style="left:0px;width:107px;">PD-00007</div>
 <div class="c " style="left:107px;width:263px;">ACCUPRIL 20<span class="th">มก.</span>14'S</div>
 <div class="c m th" style="left:370px;width:75px;">แผง</div>
 <div class="c r num" style="left:445px;width:75px;">1000</div>
 <div class="c r num" style="left:520px;width:75px;">0</div>
 <div class="c r num" style="left:595px;width:104px;">1000</div>
 <div class="c r num" style="left:699px;width:113px;">285</div>
 <div class="c r num" style="left:812px;width:113px;">285</div>
 <div class="c r num" style="left:925px;width:98px;">285000</div>
 <div class="c m dsp" style="left:1023px;width:111px;">23/06/2023</div>
</div>
<div class="a" style="left:1383px;top:432px;width:1px;height:338px;background:#8c8c8c;"></div>
<div class="a" style="left:1384px;top:432px;width:16px;height:407px;background:#f6f6f6;"></div>
<div class="a" style="left:1384px;top:432px;width:16px;height:17px;background:#f4f4f4;"></div>
<div class="a" style="left:1384px;top:449px;width:16px;height:320px;background:#efefef;border:1px solid #9a9a9a;"></div>
<svg class="a" style="left:1387px;top:436px;" width="10" height="8"><path d="M1.200 6.300l3.800-3.800l3.800 3.800" fill="none" stroke="#333" stroke-width="1.900"/></svg>
<svg class="a" style="left:1387px;top:827px;" width="10" height="8"><path d="M1.200 1.700l3.800 3.800l3.800-3.800" fill="none" stroke="#333" stroke-width="1.900"/></svg>
<!-- RIGHT -->
<div class="a" style="left:1402px;top:114px;width:186px;height:2px;background:#8a8a8a;"></div>
<div class="a" style="left:1402px;top:114px;width:2px;height:728px;background:#8a8a8a;"></div>
<div class="a" style="left:1406px;top:120px;width:182px;height:253px;border:1px solid #fff;"></div>
<div class="a" style="left:1407px;top:121px;width:180px;height:251px;border:1px solid #8e8e8e;"></div>
<div class="t" style="left:1411px;top:124px;">รหัสสินค้า</div>
<div class="t" style="left:1474px;top:124px;">ชื่อสินค้า</div>
<div class="in dis" style="left:1410px;top:138px;width:57px;height:21px;"></div>
<div class="in dis" style="left:1469px;top:138px;width:112px;height:21px;"></div>
<div class="t" style="left:1410px;top:161px;">เลขที่ใบรับ</div>
<div class="in" style="left:1411px;top:174px;width:170px;height:21px;"></div>
<div class="t" style="left:1497.5px;top:195px;">จำนวนรับ</div>
<div class="cb" style="left:1411px;top:213px;background:linear-gradient(135deg,#e4f7e4,#ffffff 70%);"></div>
<div class="t" style="left:1429px;top:213px;color:#cf1313;font-weight:bold;font-size:12.400px;">ไม่คิดต้นทุน</div>
<div class="in" style="left:1500px;top:210px;width:85px;height:21px;"></div>
<div class="t" style="left:1498.5px;top:232px;">ราคาที่รับ<span class="s">/</span>หน่วย</div>
<div class="in" style="left:1498px;top:246px;width:85px;height:21px;"></div>
<div class="t" style="left:1412px;top:269px;">ส่วนแถม</div>
<div class="t" style="left:1498.5px;top:267px;">ราคาที่รับ<span class="s">/</span><span class="l">lot</span></div>
<div class="in" style="left:1410px;top:282px;width:85px;height:21px;"></div>
<div class="in" style="left:1498px;top:282px;width:85px;height:21px;"></div>
<div class="t" style="left:1413.5px;top:305px;">เลขที่ครั้งที่ผลิต</div>
<div class="t" style="left:1498.5px;top:304px;">วันหมดอายุ</div>
<div class="in" style="left:1410px;top:318px;width:85px;height:21px;"></div>
<div class="combo" style="left:1499px;top:318px;width:85px;height:21px;"><div class="v dt" style="width:61.5px;">23/06/  2566</div><div class="bt" style="width:17px;"><svg width="8" height="10"><path d="M1 4l3-3l3 3M1 6l3 3l3-3" fill="none" stroke="#123" stroke-width="1.300"/></svg></div></div>
<div class="btn" style="left:1410px;top:344px;width:173px;height:25px;"><div class="t" style="left:0;right:0;top:4px;">รับเข้าคลัง</div></div>
<div class="a" style="left:1406px;top:375px;width:182px;height:274px;border:1px solid #fff;"></div>
<div class="a" style="left:1407px;top:376px;width:180px;height:272px;border:1px solid #8e8e8e;"></div>
<div class="t" style="left:1412px;top:378px;">รหัสสินค้า</div>
<div class="in dis" style="left:1411px;top:393px;width:173px;height:21px;"><div class="v num">PD-00007</div></div>
<div class="t" style="left:1411.5px;top:415px;">ชื่อสินค้า</div>
<div class="in dis" style="left:1411px;top:429px;width:173px;height:21px;"><div class="v num">ACCUPRIL 20<span class="th">มก.</span>14'S(<span class="th">แผง</span>)</div></div>
<div class="t" style="left:1411.5px;top:451px;">จำนวนรับ เดิม</div>
<div class="t" style="left:1499.5px;top:451px;">จำนวนรับ ใหม่</div>
<div class="in dis" style="left:1411px;top:465px;width:85px;height:21px;"><div class="v num">1000</div></div>
<div class="in" style="left:1499px;top:465px;width:85px;height:21px;"><div class="v num">1000</div></div>
<div class="t" style="left:1412px;top:486px;">ราคา<span class="s">/</span>หน่วย เดิม</div>
<div class="t" style="left:1500px;top:486px;">ราคา<span class="s">/</span>หน่วย ใหม่</div>
<div class="in dis" style="left:1411px;top:501px;width:85px;height:21px;"><div class="v num">285</div></div>
<div class="in" style="left:1499px;top:501px;width:85px;height:21px;"><div class="v num">285</div></div>
<div class="t" style="left:1412px;top:523px;">ราคา<span class="s">/</span><span class="l">lot</span> เดิม</div>
<div class="t" style="left:1500px;top:523px;">ราคา<span class="s">/</span><span class="l">lot</span> ใหม่</div>
<div class="in dis" style="left:1411px;top:537px;width:85px;height:21px;"><div class="v num">285000</div></div>
<div class="in" style="left:1499px;top:537px;width:85px;height:21px;"><div class="v num">285000</div></div>
<div class="t" style="left:1411.5px;top:559px;">วันหมดอายุเดิม</div>
<div class="t" style="left:1499.5px;top:559px;">วันหมดอายุใหม่</div>
<div class="combo" style="left:1411px;top:573px;width:85px;height:21px;background:#ececec;"><div class="v dt" style="width:61.5px;">23/06/  2563</div><div class="bt" style="width:17px;"><svg width="8" height="10"><path d="M1 4l3-3l3 3M1 6l3 3l3-3" fill="none" stroke="#123" stroke-width="1.300"/></svg></div></div>
<div class="combo" style="left:1499px;top:573px;width:85px;height:21px;"><div class="v dt" style="width:61.5px;">23/06/  2563</div><div class="bt" style="width:17px;"><svg width="8" height="10"><path d="M1 4l3-3l3 3M1 6l3 3l3-3" fill="none" stroke="#123" stroke-width="1.300"/></svg></div></div>
<div class="t" style="left:1412px;top:598px;">วันที่รับเข้าคลัง <span class="l" style="letter-spacing:-1px">–&gt;</span></div>
<div class="combo" style="left:1499px;top:595px;width:85px;height:21px;background:#ececec;"><div class="v dt" style="width:61.5px;">23/06/  2563</div><div class="bt" style="width:17px;"><svg width="8" height="10"><path d="M1 4l3-3l3 3M1 6l3 3l3-3" fill="none" stroke="#123" stroke-width="1.300"/></svg></div></div>
<div class="btn" style="left:1411px;top:619px;width:85px;height:25px;"><div class="t" style="left:0;right:0;top:5px;">ลบสินค้า <span class="l">lot</span> นี้</div></div>
<div class="btn" style="left:1499px;top:619px;width:85px;height:25px;"><div class="t" style="left:0;right:0;top:5px;">บันทึกการแก้ไข</div></div>
</body>
</html>
